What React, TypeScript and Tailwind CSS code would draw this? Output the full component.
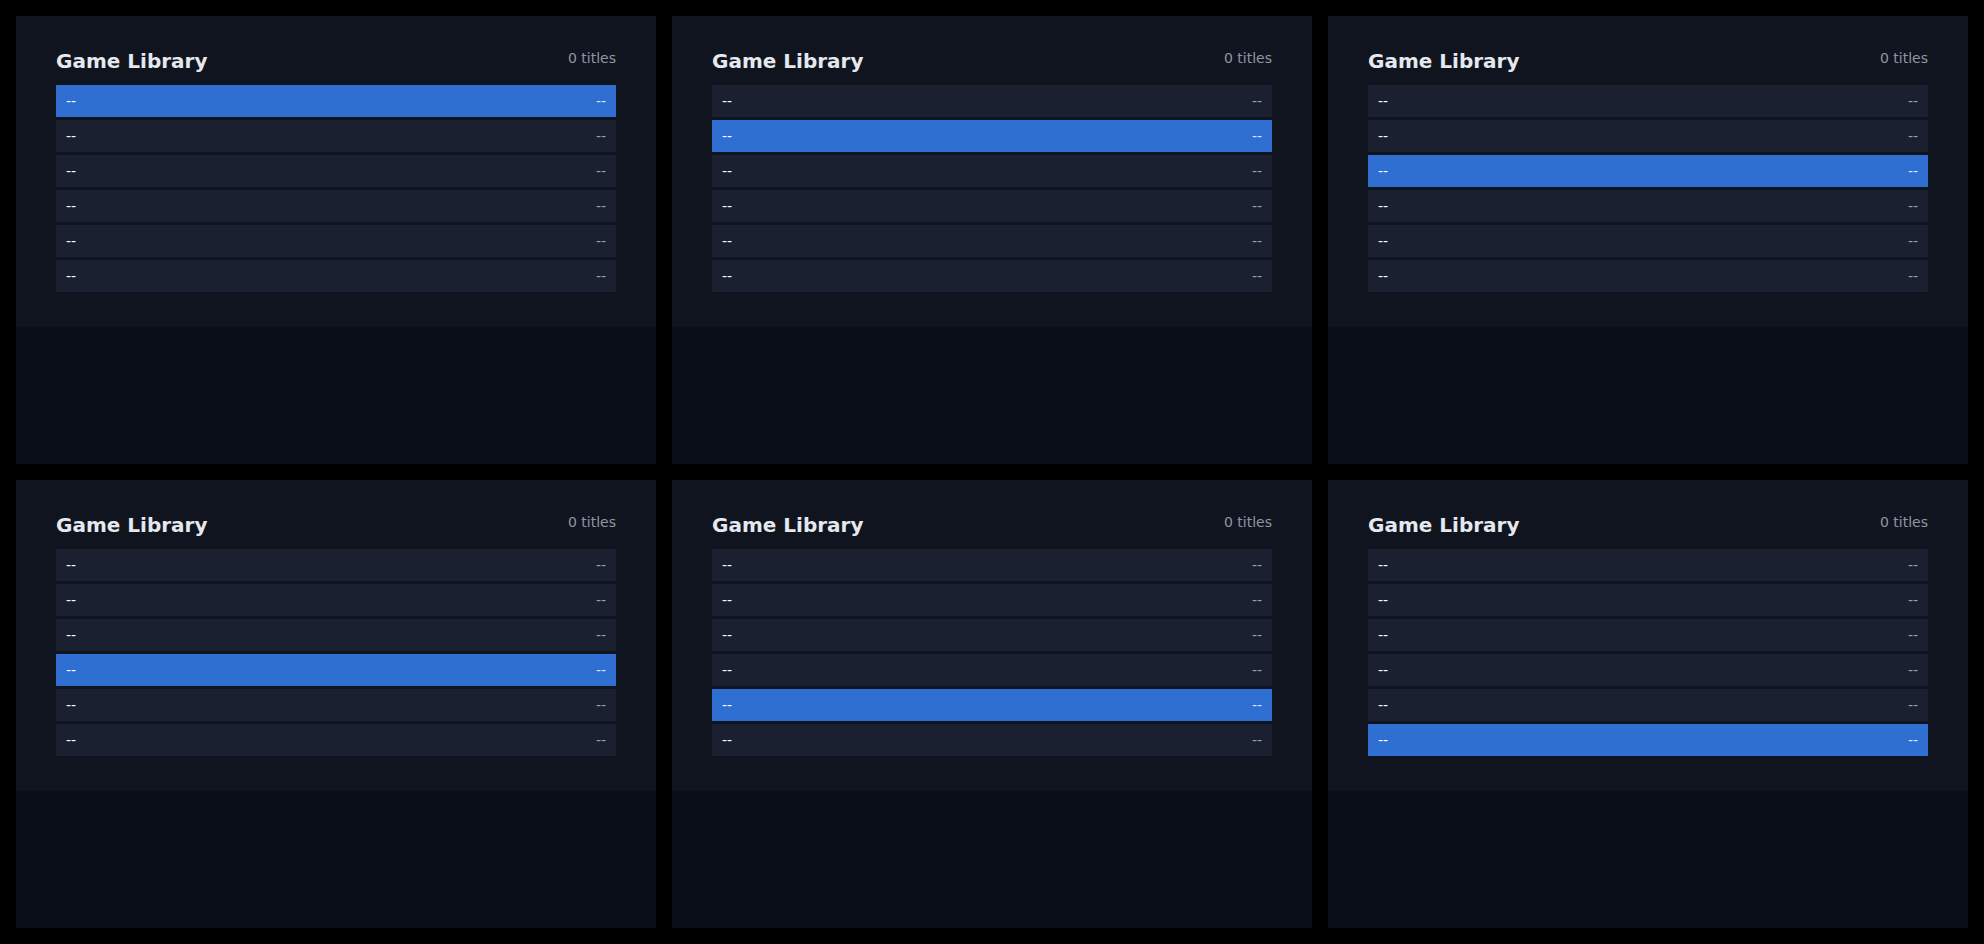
import React from 'react';

const ROWS = 6;

const LibraryPanel: React.FC<{ selected: number }> = ({ selected }) => {
  return (
    <div className="h-[448px] bg-[#0a0e19]">
      <div className="bg-[#10141f] px-10 pt-8 pb-8">
        {/* Header */}
        <div className="flex items-start justify-between mb-[11px]">
          <h2 className="text-xl leading-[26px] font-bold text-[#e5e8ee]">Game Library</h2>
          <span className="text-sm leading-5 text-[#8f96a3]">0 titles</span>
        </div>

        {/* Rows */}
        <div>
          {Array.from({ length: ROWS }).map((_, i) => (
            <div
              key={i}
              className={`h-8 mb-[3px] px-2.5 flex items-center justify-between text-sm ${
                i === selected ? 'bg-[#2f6fd1]' : 'bg-[#1b2031]'
              }`}
            >
              <span className="text-white">--</span>
              <span className={i === selected ? 'text-[#dbe6f7]' : 'text-[#9aa1ae]'}>--</span>
            </div>
          ))}
        </div>
      </div>
    </div>
  );
};

export default function App() {
  return (
    <div
      className="w-[1984px] h-[944px] bg-black p-4 grid grid-cols-3 gap-4"
      style={{ fontFamily: '"DejaVu Sans", sans-serif' }}
    >
      {[0, 1, 2, 3, 4, 5].map((n) => (
        <LibraryPanel key={n} selected={n} />
      ))}
    </div>
  );
}
